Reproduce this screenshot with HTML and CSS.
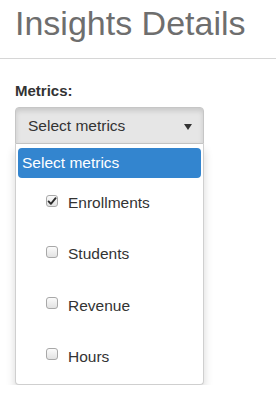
FILE: index.html
```html
<!DOCTYPE html>
<html lang="en">
<head>
    <meta charset="UTF-8">
    <meta name="viewport" content="width=device-width, initial-scale=1.0">
    <title>Insights Details</title>
    <link rel="stylesheet" href="styles.css">
</head>
<body>

<div class="page-header">
    <h1>Insights Details</h1>
</div>

<div class="filters">
    <label class="field-label">Metrics:</label>
    <div class="dropdown">
        <button class="dropdown-toggle" type="button">
            <span>Select metrics</span>
            <span class="caret"></span>
        </button>
        <ul class="dropdown-menu">
            <li class="placeholder">Select metrics</li>
            <li class="option">
                <span class="check checked">
                    <svg width="10" height="10" viewBox="0 0 10 10"><path d="M1.6 5.4 L3.9 7.8 L8.6 2.2" fill="none" stroke="#2b2b2b" stroke-width="1.9" stroke-linecap="round" stroke-linejoin="round"/></svg>
                </span>
                <span>Enrollments</span>
            </li>
            <li class="option">
                <span class="check"></span>
                <span>Students</span>
            </li>
            <li class="option">
                <span class="check"></span>
                <span>Revenue</span>
            </li>
            <li class="option">
                <span class="check"></span>
                <span>Hours</span>
            </li>
        </ul>
    </div>
</div>

</body>
</html>
```

FILE: styles.css
```css
body {
    margin: 0;
    font-family: "Liberation Sans", Arial, sans-serif;
    color: #333;
    background-color: #fff;
}
.page-header {
    padding: 4px 15px 16px;
    border-bottom: 1px solid #d6d6d6;
}
.page-header h1 {
    margin: 0;
    font-size: 34px;
    font-weight: normal;
    line-height: 38px;
    color: #6e6e6e;
}
.filters {
    padding: 22px 15px 0;
}
.field-label {
    display: block;
    font-size: 15px;
    font-weight: bold;
    line-height: 20px;
    margin-bottom: 6px;
}
.dropdown {
    width: 189px;
}
.dropdown-toggle {
    display: flex;
    align-items: center;
    justify-content: space-between;
    width: 100%;
    height: 37px;
    padding: 0 11px 0 12px;
    font-family: inherit;
    font-size: 15.5px;
    color: #333;
    background-color: #e6e6e6;
    border: 1px solid #c6c6c6;
    border-radius: 4px 4px 0 0;
    box-shadow: inset 0 3px 5px rgba(0, 0, 0, 0.125);
}
.caret {
    width: 0;
    height: 0;
    margin-top: 2px;
    border-left: 4px solid transparent;
    border-right: 4px solid transparent;
    border-top: 6px solid #333;
}
.dropdown-menu {
    list-style: none;
    margin: 0;
    padding: 4px 2px 1px;
    background-color: #fff;
    border: 1px solid #cfcfcf;
    border-top: none;
    border-radius: 0 0 4px 4px;
    box-shadow: 0 6px 10px rgba(0, 0, 0, 0.16);
    font-size: 15.5px;
}
.placeholder {
    height: 30px;
    line-height: 30px;
    padding-left: 4px;
    color: #fff;
    background-color: #3385cf;
    border-radius: 4px;
}
.option {
    display: flex;
    align-items: flex-start;
    gap: 10px;
    height: 51.33px;
    box-sizing: border-box;
    padding: 15px 0 0 28px;
    line-height: 20px;
}
.check {
    display: flex;
    align-items: center;
    justify-content: center;
    width: 12px;
    height: 12px;
    margin-top: 1.5px;
    box-sizing: border-box;
    border: 1px solid #a8a8a8;
    border-radius: 3px;
    background: linear-gradient(#fbfbfb, #e2e2e2);
}
```
